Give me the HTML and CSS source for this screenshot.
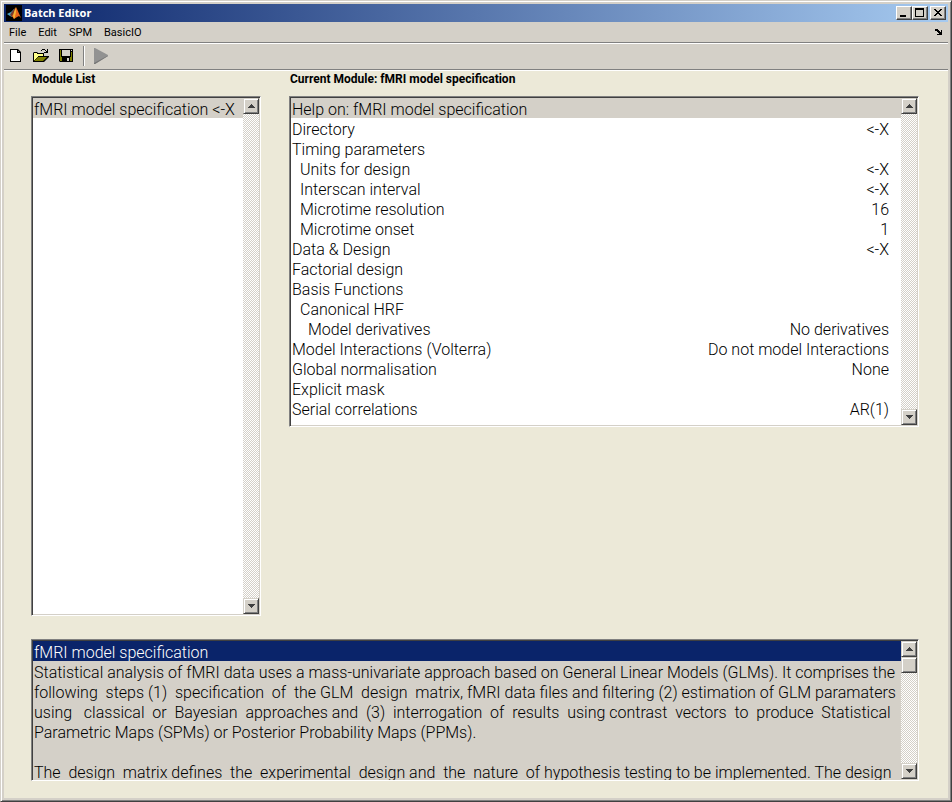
FILE: index.html
```html
<!DOCTYPE html>
<html lang="en">
<head>
<meta charset="utf-8">
<title>Batch Editor</title>
<link rel="stylesheet" href="styles.css">
</head>
<body>
<div class="window">
  <header class="titlebar">
    <svg class="logo" viewBox="0 0 16 16" aria-hidden="true">
      <rect width="16" height="16" fill="#000"/>
      <path d="M1 9l4-2 3-3 1 3-3 5-2-1z" fill="#4aa3c4"/>
      <path d="M5 8l4-5 1 3-2 5-2 1-2-2z" fill="#7a3a2c"/>
      <path d="M10 2l1 2 4 9-2-2-2 1-3 2-2-3 2-3z" fill="#e8641c"/>
      <path d="M10 2l0 5-1 5-1 2-1-3 1-4z" fill="#f7b233"/>
    </svg>
    <h1>Batch Editor</h1>
    <div class="controls">
      <button class="ctl" type="button" aria-label="Minimize"><svg viewBox="0 0 12 10"><path d="M2 7h6v2H2z"/></svg></button>
      <button class="ctl" type="button" aria-label="Maximize"><svg viewBox="0 0 12 10"><path fill-rule="evenodd" d="M1 0h9v9H1zM2 2v6h7V2z"/></svg></button>
      <button class="ctl close" type="button" aria-label="Close"><svg viewBox="0 0 12 10"><path d="M2 1h2v1h1v1h2V2h1V1h2v1H9v1H8v1H7v1h1v1h1v1h1v1H8V7H7V6H5v1H4v1H2V7h1V6h1V5h1V4H4V3H3V2H2z"/></svg></button>
    </div>
  </header>
  <nav class="menubar">
    <button type="button">File</button>
    <button type="button">Edit</button>
    <button type="button">SPM</button>
    <button type="button">BasicIO</button>
    <button class="dock" type="button" aria-label="Dock"><svg viewBox="0 0 8 6"><path d="M0 0h3v1h1v1h1v1h1V1h1v5H2V5h2V4H3V3H2V2H0z"/></svg></button>
  </nav>
  <div class="toolbar">
    <button type="button" aria-label="New"><svg viewBox="0 0 16 16"><path d="M2 1h8l3 3v10H2z"/><path d="M3 2h6v3h3v8H3z" fill="#fff"/><path d="M10 3v1h1z" fill="#fff"/></svg></button>
    <button type="button" aria-label="Open"><svg viewBox="0 0 16 16"><path d="M9 1h3v1h1v1h1V1h1v4h-4V4h2V3h-1V2H9v1H8V2h1zM0 5l1-1h3l1 1h6v3h5v1l-5 5H0z"/><path d="M1 5h3v1h6v2H5v1H4v1H3v1H2v1H1z" fill="#ff8"/><path d="M5 9h9l-4 4H1z" fill="#808000"/></svg></button>
    <button type="button" aria-label="Save"><svg viewBox="0 0 16 16"><path d="M1 1h14v13H2l-1-1z"/><path d="M2 2h1v7h10V4h1v9h-2V9H4v4H2z" fill="#808000"/><path d="M4 2h8v6H4zM13 2h1v1h-1zM9 10h2v3H9z" fill="#d4d0c8"/></svg></button>
    <span class="divider"></span>
    <button type="button" aria-label="Run"><svg viewBox="0 0 16 16"><path d="M0 0h1l13 7v1L1 16H0z" fill="#929292"/><path d="M0 15l13-7h1L1 16H0z" fill="#777"/></svg></button>
  </div>
  <main>
    <div class="panels">
      <section class="modules">
        <h2>Module List</h2>
        <div class="box">
          <ul class="rows"><li class="current">fMRI model specification &lt;-X</li></ul>
          <div class="scroll">
            <button type="button" aria-label="Scroll up"><svg viewBox="0 0 7 4"><path d="M3 0h1v1h1v1h1v1h1v1H0V3h1V2h1V1h1z"/></svg></button>
            <button type="button" aria-label="Scroll down"><svg viewBox="0 0 7 4"><path d="M0 0h7v1H6v1H5v1H4v1H3V3H2V2H1V1H0z"/></svg></button>
          </div>
        </div>
      </section>
      <section class="module">
        <h2>Current Module: fMRI model specification</h2>
        <div class="box">
          <table class="rows">
            <tr class="current"><th colspan="2">Help on: fMRI model specification</th></tr>
            <tr><th>Directory</th><td>&lt;-X</td></tr>
            <tr><th>Timing parameters</th><td></td></tr>
            <tr><th class="sub">Units for design</th><td>&lt;-X</td></tr>
            <tr><th class="sub">Interscan interval</th><td>&lt;-X</td></tr>
            <tr><th class="sub">Microtime resolution</th><td>16</td></tr>
            <tr><th class="sub">Microtime onset</th><td>1</td></tr>
            <tr><th>Data &amp; Design</th><td>&lt;-X</td></tr>
            <tr><th>Factorial design</th><td></td></tr>
            <tr><th>Basis Functions</th><td></td></tr>
            <tr><th class="sub">Canonical HRF</th><td></td></tr>
            <tr><th class="subsub">Model derivatives</th><td>No derivatives</td></tr>
            <tr><th>Model Interactions (Volterra)</th><td>Do not model Interactions</td></tr>
            <tr><th>Global normalisation</th><td>None</td></tr>
            <tr><th>Explicit mask</th><td></td></tr>
            <tr><th>Serial correlations</th><td>AR(1)</td></tr>
          </table>
          <div class="scroll">
            <button type="button" aria-label="Scroll up"><svg viewBox="0 0 7 4"><path d="M3 0h1v1h1v1h1v1h1v1H0V3h1V2h1V1h1z"/></svg></button>
            <button type="button" aria-label="Scroll down"><svg viewBox="0 0 7 4"><path d="M0 0h7v1H6v1H5v1H4v1H3V3H2V2H1V1H0z"/></svg></button>
          </div>
        </div>
      </section>
    </div>
    <section class="box help">
      <ul class="rows">
        <li class="selected">fMRI model specification</li>
        <li>Statistical analysis of fMRI data uses a mass-univariate approach based on General Linear Models (GLMs). It comprises the</li>
        <li>following  steps (1)  specification  of  the GLM  design  matrix, fMRI data files and filtering (2) estimation of GLM paramaters</li>
        <li>using   classical  or  Bayesian  approaches and  (3)  interrogation  of  results  using contrast  vectors  to  produce  Statistical</li>
        <li>Parametric Maps (SPMs) or Posterior Probability Maps (PPMs).</li>
        <li></li>
        <li>The  design  matrix defines  the  experimental  design and  the  nature  of hypothesis testing to be implemented. The design</li>
      </ul>
      <div class="scroll">
        <button type="button" aria-label="Scroll up"><svg viewBox="0 0 7 4"><path d="M3 0h1v1h1v1h1v1h1v1H0V3h1V2h1V1h1z"/></svg></button>
        <span class="thumb"></span>
        <button type="button" aria-label="Scroll down"><svg viewBox="0 0 7 4"><path d="M0 0h7v1H6v1H5v1H4v1H3V3H2V2H1V1H0z"/></svg></button>
      </div>
    </section>
  </main>
</div>
</body>
</html>
```

FILE: styles.css
```css
* { box-sizing: border-box; }
body { margin: 0; font-family: Roboto, "Liberation Sans", Arial, sans-serif; color: #000; }
h1, h2, ul { margin: 0; padding: 0; }
button { margin: 0; padding: 0; border: 0; background: #d4d0c8; color: inherit; font: inherit; }
svg { display: block; }

.window {
  display: flex;
  flex-direction: column;
  min-height: 100vh;
  padding: 3px;
  border: 1px solid;
  border-color: #d4d0c8 #404040 #404040 #d4d0c8;
  background: #d4d0c8;
  box-shadow: inset 1px 1px #fff, inset -1px -1px #808080;
}

.titlebar {
  display: flex;
  align-items: center;
  height: 18px;
  padding: 0 2px;
  background: linear-gradient(90deg, #0a246a, #a6caf0);
  color: #fff;
  font: bold 11px "Noto Sans", sans-serif;
}
.titlebar h1 { flex: 1; margin-left: 2px; font-size: 11px; line-height: 18px; }
.logo { width: 16px; height: 16px; }
.controls { display: flex; color: #000; }
.ctl {
  width: 16px;
  height: 14px;
  padding: 1px;
  border: 1px solid;
  border-color: #fff #404040 #404040 #fff;
  box-shadow: inset -1px -1px #808080;
}
.ctl svg { width: 12px; height: 10px; }
.close { margin-left: 2px; }

.menubar, .toolbar {
  display: flex;
  align-items: center;
  border-bottom: 1px solid #fff;
  box-shadow: inset 0 -1px #808080;
}
.menubar { gap: 12px; height: 22px; padding: 0 5px 1px; font-size: 11px; }
.dock { margin-left: auto; }
.dock svg { width: 8px; height: 6px; }
.toolbar { gap: 9px; height: 27px; padding: 0 4px 2px; }
.toolbar svg { width: 16px; height: 16px; }
.divider { width: 2px; height: 20px; background: linear-gradient(90deg, #808080 50%, #fff 50%); }

main {
  flex: 1;
  display: flex;
  flex-direction: column;
  gap: 23px;
  padding: 0 29px 17px 27px;
  background: #ece9d8;
}
.panels { flex: 1; display: flex; align-items: stretch; gap: 28px; }
.modules { flex: 230 1 0; display: flex; flex-direction: column; }
.modules .box { flex: 1; }
.module { flex: 630 1 0; }
h2 { height: 25px; padding-left: 1px; font-size: 12px; line-height: 16px; }

.box {
  display: flex;
  padding: 1px;
  border: 1px solid;
  border-color: #808080 #fff #fff #808080;
  background: #fff;
  box-shadow: inset 1px 1px #404040, inset -1px -1px #d4d0c8;
}
.rows { flex: 1; min-width: 0; list-style: none; font-size: 16px; font-weight: 300; line-height: 20px; }
.rows li { height: 20px; padding: 2px 0 0 1px; white-space: pre; }
table.rows { align-self: flex-start; margin-bottom: 7px; border-collapse: collapse; }
th, td { height: 20px; padding: 4px 0 0 1px; font-weight: 300; line-height: 16px; text-align: left; }
td { padding-right: 12px; text-align: right; }
.sub { padding-left: 9px; }
.subsub { padding-left: 17px; }
.current { background: #d4d0c8; }
.selected { background: #0a246a; color: #fff; }
.help { height: 142px; background: #d4d0c8; overflow: hidden; }

.scroll {
  display: flex;
  flex-direction: column;
  width: 16px;
  flex: none;
  background: repeating-conic-gradient(#fff 0 25%, #d4d0c8 0 50%) 0 0 / 2px 2px;
}
.scroll button, .thumb {
  display: grid;
  place-items: center;
  height: 16px;
  flex: none;
  background: #d4d0c8;
  border: 1px solid;
  border-color: #d4d0c8 #404040 #404040 #d4d0c8;
  box-shadow: inset 1px 1px #fff, inset -1px -1px #808080;
}
.scroll button:last-child { margin-top: auto; }
.scroll svg { width: 7px; height: 4px; fill: #404040; }
```
